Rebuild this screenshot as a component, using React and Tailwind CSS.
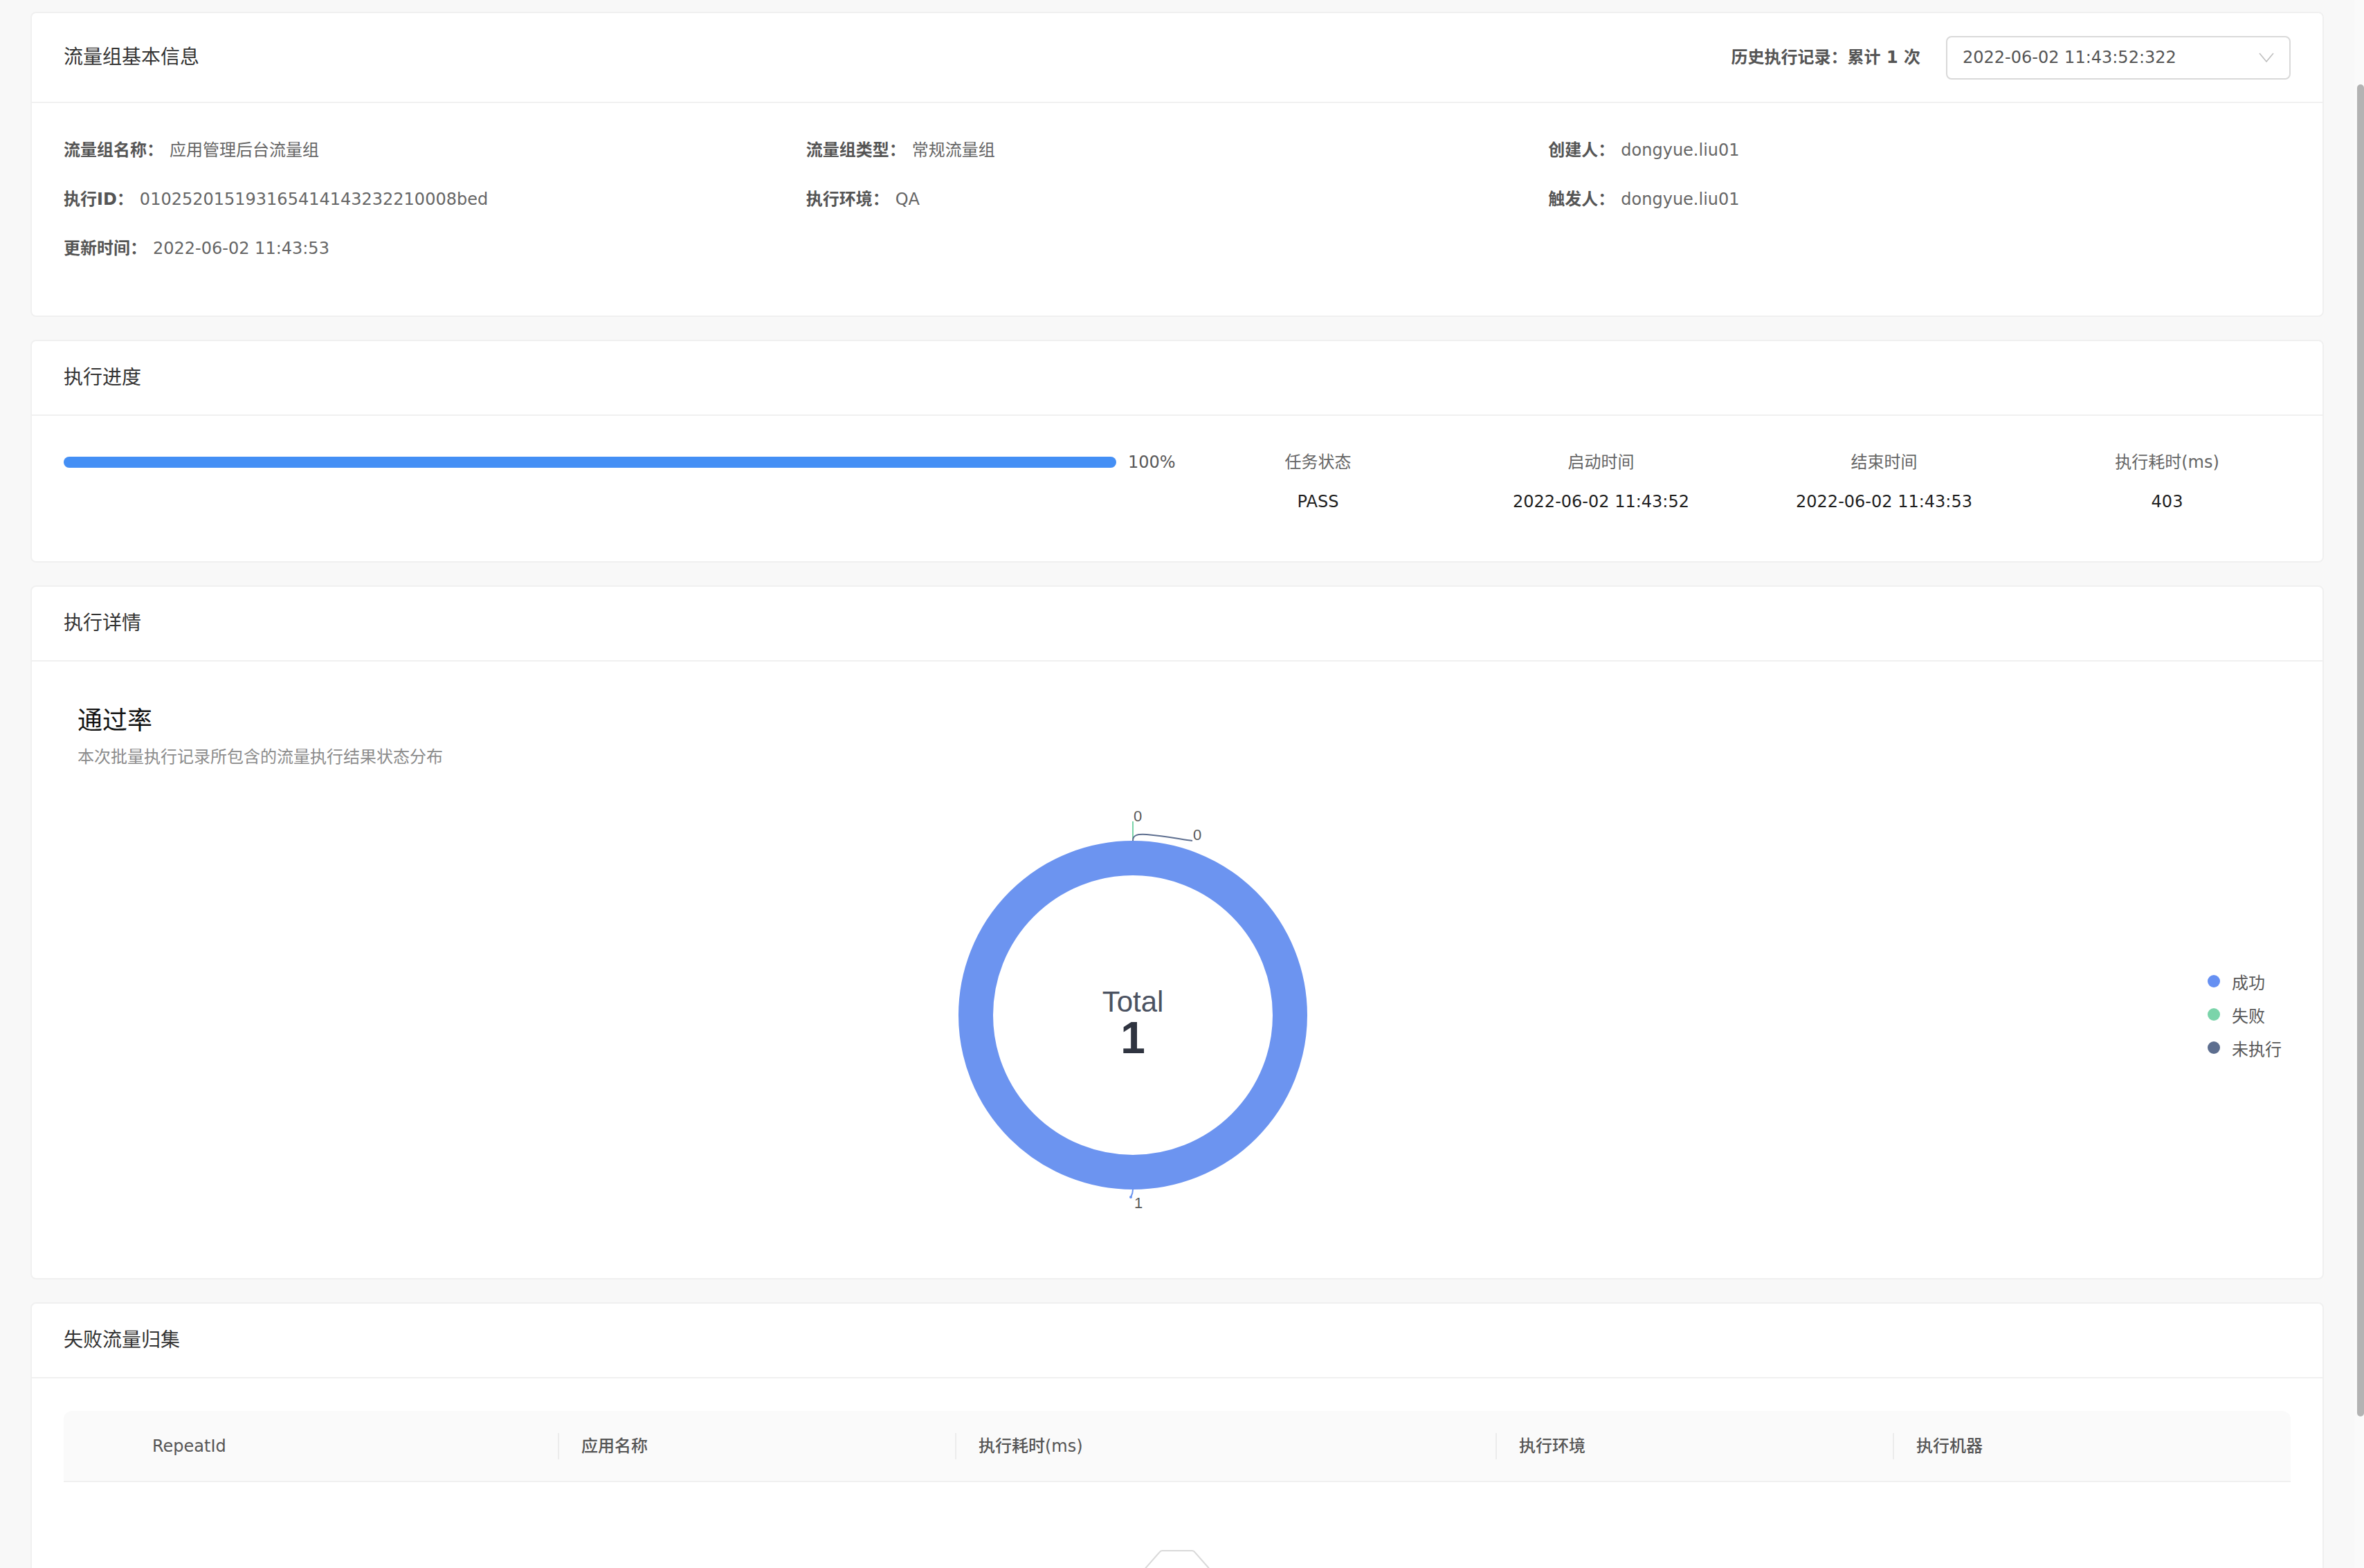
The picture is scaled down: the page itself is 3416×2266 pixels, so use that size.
import React from "react";

const font = "font-['DejaVu_Sans','Noto_Sans_CJK_SC',sans-serif]";

const Card = ({ title, extra, headerClass, children }) => {
  return (
    <div className="bg-white rounded-[8px] border-2 border-[#f0f0f0]">
      <div
        className={`flex items-center justify-between px-[46px] border-b-2 border-[#f0f0f0] ${headerClass}`}
      >
        <span className="text-[28px] leading-[40px] text-[#333]">{title}</span>
        {extra}
      </div>
      {children}
    </div>
  );
};

const InfoItem = ({ label, value }) => (
  <div className="h-[71px] flex items-center text-[24px]">
    <span className="font-bold text-[#555] mr-[9px]">{label}：</span>
    <span className="text-[#666]">{value}</span>
  </div>
);

const Stat = ({ label, value }) => (
  <div className="w-[409px] flex flex-col items-center">
    <span className="text-[24px] leading-[36px] text-[#666]">{label}</span>
    <span className="mt-[21px] text-[24px] leading-[36px] text-[#1f1f1f]">{value}</span>
  </div>
);

const Donut = () => {
  const legend = [
    { label: "成功", color: "#6690f2" },
    { label: "失败", color: "#7bd4aa" },
    { label: "未执行", color: "#5d6e8f" },
  ];
  return (
    <div className="relative h-[700px]">
      <svg width="3218" height="700" className="absolute left-0 top-0">
        <circle cx="1545" cy="355" r="227" fill="none" stroke="#6c94f0" strokeWidth="50" />
        <line x1="1545" y1="75" x2="1545" y2="101" stroke="#7bd4aa" strokeWidth="2" />
        <path
          d="M1545 103 C1545 95 1551 93 1565 94 C1590 96 1610 100 1631 103"
          fill="none"
          stroke="#5d6e8f"
          strokeWidth="2"
        />
        <path d="M1545 607 Q1545 613 1542 618" fill="none" stroke="#6c94f0" strokeWidth="2" />
        <circle cx="1542" cy="618" r="2" fill="#6c94f0" />
        <g fontFamily="'Liberation Sans', Arial, sans-serif" fontSize="22" fill="#595959">
          <text x="1546" y="75">0</text>
          <text x="1632" y="102">0</text>
          <text x="1547" y="634">1</text>
        </g>
        <text
          x="1545"
          y="350"
          textAnchor="middle"
          fontFamily="'Liberation Sans', Arial, sans-serif"
          fontSize="42"
          fill="#4b5261"
        >
          Total
        </text>
        <text
          x="1545"
          y="410"
          textAnchor="middle"
          fontFamily="'Liberation Sans', Arial, sans-serif"
          fontSize="64"
          fontWeight="bold"
          fill="#2f3440"
        >
          1
        </text>
        {legend.map((item, index) => (
          <g key={index}>
            <circle cx="3107" cy={306 + index * 48} r="9" fill={item.color} />
            <text
              x="3133"
              y={306 + index * 48}
              dominantBaseline="central"
              fontFamily="'Noto Sans CJK SC', sans-serif"
              fontSize="24"
              fill="#595959"
            >
              {item.label}
            </text>
          </g>
        ))}
      </svg>
    </div>
  );
};

const EmptyIcon = () => (
  <svg width="128" height="82" viewBox="0 0 64 41" className="mx-auto">
    <g transform="translate(0 1)" fill="none" fillRule="evenodd">
      <ellipse fill="#f5f5f5" cx="32" cy="33" rx="32" ry="7" />
      <g fillRule="nonzero" stroke="#d9d9d9">
        <path d="M55 12.76L44.854 1.258C44.367.474 43.656 0 42.907 0H21.093c-.749 0-1.46.474-1.947 1.257L9 12.761V22h46v-9.24z" />
        <path
          d="M41.613 15.931c0-1.605.994-2.93 2.227-2.931H55v18.137C55 33.26 53.68 35 52.05 35h-40.1C10.32 35 9 33.259 9 31.137V13h11.16c1.233 0 2.227 1.323 2.227 2.928v.022c0 1.605 1.005 2.901 2.237 2.901h14.752c1.232 0 2.237-1.308 2.237-2.913v-.007z"
          fill="#fafafa"
        />
      </g>
    </g>
  </svg>
);

const App = () => {
  const columns = [
    { title: "应用名称", w: "w-[572px]" },
    { title: "执行耗时(ms)", w: "w-[779px]" },
    { title: "执行环境", w: "w-[572px]" },
    { title: "执行机器", w: "flex-1" },
  ];

  return (
    <div className={`flex h-[2266px] overflow-hidden bg-[#f8f8f8] ${font}`}>
      <div className="flex-1 flex flex-col gap-[33px] pl-[44px] pr-[44px] pt-[17px]">
        {/* 基本信息 */}
        <Card
          title="流量组基本信息"
          headerClass="h-[130px]"
          extra={
            <div className="flex items-center">
              <span className="text-[24px] font-bold text-[#555]">
                历史执行记录：累计 1 次
              </span>
              <div className="ml-[37px] w-[498px] h-[63px] border-2 border-[#d9d9d9] rounded-[8px] flex items-center justify-between pl-[22px] pr-[22px]">
                <span className="text-[24px] text-[#555]">2022-06-02 11:43:52:322</span>
                <svg width="22" height="14" viewBox="0 0 22 14">
                  <path d="M1 1 L11 13 L21 1" fill="none" stroke="#bfbfbf" strokeWidth="1.6" />
                </svg>
              </div>
            </div>
          }
        >
          <div className="grid grid-cols-3 px-[46px] pt-[32px] pb-[62px]">
            <InfoItem label="流量组名称" value="应用管理后台流量组" />
            <InfoItem label="流量组类型" value="常规流量组" />
            <InfoItem label="创建人" value="dongyue.liu01" />
            <InfoItem label="执行ID" value="010252015193165414143232210008bed" />
            <InfoItem label="执行环境" value="QA" />
            <InfoItem label="触发人" value="dongyue.liu01" />
            <InfoItem label="更新时间" value="2022-06-02 11:43:53" />
          </div>
        </Card>

        {/* 执行进度 */}
        <Card title="执行进度" headerClass="h-[108px]">
          <div className="flex pl-[46px] pr-[20px] pt-[49px] pb-[68px]">
            <div className="w-[1608px] h-[36px] flex items-center">
              <div className="w-[1521px] h-[16px] rounded-full bg-[#448ff5]" />
              <span className="ml-[17px] text-[24px] text-[#595959]">100%</span>
            </div>
            <Stat label="任务状态" value="PASS" />
            <Stat label="启动时间" value="2022-06-02 11:43:52" />
            <Stat label="结束时间" value="2022-06-02 11:43:53" />
            <Stat label="执行耗时(ms)" value="403" />
          </div>
        </Card>

        {/* 执行详情 */}
        <Card title="执行详情" headerClass="h-[108px]">
          <div className="px-[46px] pt-[61px] pb-[35px]">
            <div className="pl-[20px]">
              <div className="text-[36px] leading-[50px] text-[#111]">通过率</div>
              <div className="mt-[9px] text-[24px] leading-[36px] text-[#8c8c8c]">
                本次批量执行记录所包含的流量执行结果状态分布
              </div>
            </div>
            <Donut />
          </div>
        </Card>

        {/* 失败流量归集 */}
        <Card title="失败流量归集" headerClass="h-[108px]">
          <div className="px-[46px] pt-[47px]">
            <div className="h-[103px] flex items-center bg-[#fafafa] rounded-t-[12px] border-b-2 border-[#f0f0f0] text-[24px] text-[#555] font-medium">
              <div className="w-[714px] pl-[128px] font-normal">RepeatId</div>
              {columns.map((col, index) => (
                <React.Fragment key={index}>
                  <div className="w-[2px] h-[38px] bg-[#ececec]" />
                  <div className={`${col.w} pl-[32px]`}>{col.title}</div>
                </React.Fragment>
              ))}
            </div>
            <div className="pt-[97px] pb-[80px]">
              <EmptyIcon />
            </div>
          </div>
        </Card>
      </div>

      {/* scrollbar */}
      <div className="w-[14px] bg-[#fafafa] flex justify-end">
        <div className="mt-[122px] w-[10px] h-[1925px] rounded-full bg-[#b3b3b3]" />
      </div>
    </div>
  );
};

export default App;
